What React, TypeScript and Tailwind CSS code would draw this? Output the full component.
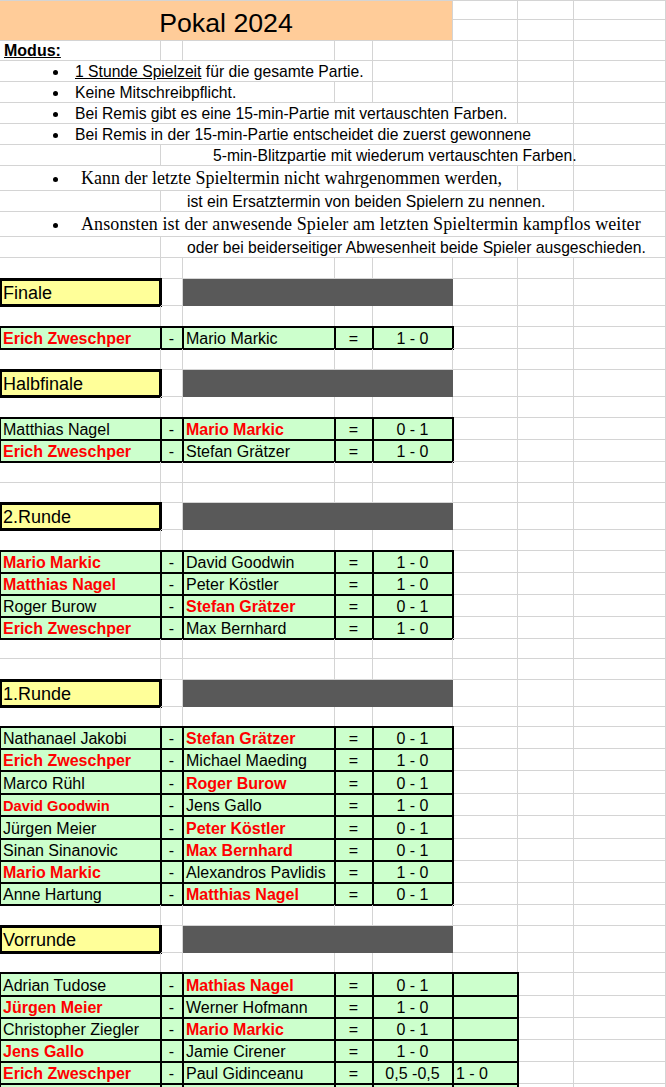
import React from "react";

// Spalten A–H wie im Tabellenblatt
const GRID = "grid grid-cols-[161px_22px_152px_38px_80px_65px_56px_92px]";
const LINE = "border-r border-b border-[#d4d4d4]";
const THICK = "outline-2 outline-solid outline-black -outline-offset-1 bg-[#ccffcc]";
const CELL = "flex items-end whitespace-nowrap overflow-hidden";
const TXT = "flex items-end whitespace-nowrap";
const WIN = "font-bold text-[#ff0000]";
const DESC = "text-[15.7px] leading-[18px]";

function Blank({ span = "" }: { span?: string }) {
  return <div className={`${LINE} ${span}`} />;
}

function Blanks({ n }: { n: number }) {
  return (
    <>
      {Array.from({ length: n }).map((_, i) => (
        <Blank key={i} />
      ))}
    </>
  );
}

function EmptyRow({ h }: { h: string }) {
  return (
    <div className={`${GRID} ${h}`}>
      <Blanks n={8} />
    </div>
  );
}

function Dot({ serif }: { serif?: boolean }) {
  return (
    <>
      <span className="w-[53px] shrink-0" />
      <span
        className={`w-[5px] h-[5px] shrink-0 self-center rounded-full bg-black ${serif ? "mt-[4px]" : "mt-[3px]"}`}
      />
      <span className={serif ? "w-[23px] shrink-0" : "w-[17px] shrink-0"} />
    </>
  );
}

function Header({ label }: { label: string }) {
  return (
    <div className={`${GRID} h-[27px]`}>
      <div
        className={`${LINE} bg-[#ffff99] outline-[3px] outline-solid outline-black -outline-offset-2 flex items-end pl-[3px] pb-[2px] text-[18px] leading-[20px]`}
      >
        {label}
      </div>
      <Blank />
      <div className="col-span-3 bg-[#595959]" />
      <Blanks n={3} />
    </div>
  );
}

type MatchProps = {
  a?: string;
  b?: string;
  r?: string;
  w?: 0 | 1;
  h?: string;
  wide?: boolean;
  extra?: string;
  smallA?: boolean;
  empty?: boolean;
};

function Match({ a = "", b = "", r = "", w, h = "h-[22px]", wide, extra, smallA, empty }: MatchProps) {
  return (
    <div className={`${GRID} ${h} text-[16px] leading-[18px]`}>
      <div className={`${LINE} ${THICK} ${CELL} pl-[3px] ${w === 0 ? WIN : ""} ${smallA ? "text-[14.67px]" : ""}`}>
        {a}
      </div>
      <div className={`${LINE} ${THICK} ${CELL} justify-center`}>{empty ? "" : "-"}</div>
      <div className={`${LINE} ${THICK} ${CELL} pl-[3px] ${w === 1 ? WIN : ""}`}>{b}</div>
      <div className={`${LINE} ${THICK} ${CELL} justify-center`}>{empty ? "" : "="}</div>
      <div className={`${LINE} ${THICK} ${CELL} justify-center`}>{r}</div>
      {wide ? <div className={`${LINE} ${THICK} ${CELL} pl-[3px]`}>{extra}</div> : <Blank />}
      <Blanks n={2} />
    </div>
  );
}

export default function App() {
  return (
    <div className="w-[666px] bg-white text-black font-['Liberation_Sans',Arial,sans-serif]">
      {/* Titel */}
      <div className={`${GRID} grid-rows-[19px_21px] border-t border-[#d4d4d4]`}>
        <div className={`${LINE} col-span-5 row-span-2 bg-[#ffcc99] flex items-end justify-center pb-[2px] text-[26.7px] leading-[30px]`}>
          Pokal 2024
        </div>
        <Blanks n={6} />
      </div>

      {/* Modus */}
      <div className={`${GRID} h-[20px] text-[16px] leading-[18px]`}>
        <div className={`${LINE} ${TXT} pl-[4px] font-bold underline`}>Modus:</div>
        <Blanks n={7} />
      </div>
      <div className={`${GRID} h-[21px] ${DESC}`}>
        <div className={`${LINE} ${TXT} col-span-4`}>
          <Dot />
          <span>
            <span className="underline">1 Stunde Spielzeit</span> für die gesamte Partie.
          </span>
        </div>
        <Blanks n={4} />
      </div>
      <div className={`${GRID} h-[21px] ${DESC}`}>
        <div className={`${LINE} ${TXT} col-span-3`}>
          <Dot />
          <span>Keine Mitschreibpflicht.</span>
        </div>
        <Blanks n={5} />
      </div>
      <div className={`${GRID} h-[21px] ${DESC}`}>
        <div className={`${LINE} ${TXT} col-span-6`}>
          <Dot />
          <span>Bei Remis gibt es eine 15-min-Partie mit vertauschten Farben.</span>
        </div>
        <Blanks n={2} />
      </div>
      <div className={`${GRID} h-[21px] ${DESC}`}>
        <div className={`${LINE} ${TXT} col-span-7`}>
          <Dot />
          <span>Bei Remis in der 15-min-Partie entscheidet die zuerst gewonnene</span>
        </div>
        <Blank />
      </div>
      <div className={`${GRID} h-[21px] ${DESC}`}>
        <Blank />
        <div className={`${LINE} ${TXT} col-span-6 pl-[52px]`}>
          5-min-Blitzpartie mit wiederum vertauschten Farben.
        </div>
        <Blank />
      </div>
      <div className={`${GRID} h-[25px] text-[18px] leading-[20px]`}>
        <div className={`${LINE} ${TXT} col-span-6 pb-[2px] font-['Liberation_Serif','Times_New_Roman',serif]`}>
          <Dot serif />
          <span>Kann der letzte Spieltermin nicht wahrgenommen werden,</span>
        </div>
        <Blanks n={2} />
      </div>
      <div className={`${GRID} h-[21px] ${DESC}`}>
        <Blank />
        <div className={`${LINE} ${TXT} col-span-6 pl-[26px]`}>
          ist ein Ersatztermin von beiden Spielern zu nennen.
        </div>
        <Blank />
      </div>
      <div className={`${GRID} h-[25px] text-[18px] leading-[20px]`}>
        <div className={`${LINE} ${TXT} col-span-8 pb-[2px] tracking-[0.1px] font-['Liberation_Serif','Times_New_Roman',serif]`}>
          <Dot serif />
          <span>Ansonsten ist der anwesende Spieler am letzten Spieltermin kampflos weiter</span>
        </div>
      </div>
      <div className={`${GRID} h-[21px] ${DESC}`}>
        <Blank />
        <div className={`${LINE} ${TXT} col-span-7 pl-[26px]`}>
          oder bei beiderseitiger Abwesenheit beide Spieler ausgeschieden.
        </div>
      </div>
      <EmptyRow h="h-[21px]" />

      {/* Finale */}
      <Header label="Finale" />
      <EmptyRow h="h-[21px]" />
      <Match a="Erich Zweschper" b="Mario Markic" r="1 - 0" w={0} />
      <EmptyRow h="h-[21px]" />

      {/* Halbfinale */}
      <Header label="Halbfinale" />
      <EmptyRow h="h-[21px]" />
      <Match a="Matthias Nagel" b="Mario Markic" r="0 - 1" w={1} />
      <Match a="Erich Zweschper" b="Stefan Grätzer" r="1 - 0" w={0} />
      <EmptyRow h="h-[21px]" />
      <EmptyRow h="h-[20px]" />

      {/* 2. Runde */}
      <Header label="2.Runde" />
      <EmptyRow h="h-[21px]" />
      <Match a="Mario Markic" b="David Goodwin" r="1 - 0" w={0} />
      <Match a="Matthias Nagel" b="Peter Köstler" r="1 - 0" w={0} />
      <Match a="Roger Burow" b="Stefan Grätzer" r="0 - 1" w={1} />
      <Match a="Erich Zweschper" b="Max Bernhard" r="1 - 0" w={0} />
      <EmptyRow h="h-[20px]" />
      <EmptyRow h="h-[21px]" />

      {/* 1. Runde */}
      <Header label="1.Runde" />
      <EmptyRow h="h-[20px]" />
      <Match a="Nathanael Jakobi" b="Stefan Grätzer" r="0 - 1" w={1} />
      <Match a="Erich Zweschper" b="Michael Maeding" r="1 - 0" w={0} />
      <Match a="Marco Rühl" b="Roger Burow" r="0 - 1" w={1} h="h-[23px]" />
      <Match a="David Goodwin" b="Jens Gallo" r="1 - 0" w={0} smallA />
      <Match a="Jürgen Meier" b="Peter Köstler" r="0 - 1" w={1} h="h-[23px]" />
      <Match a="Sinan Sinanovic" b="Max Bernhard" r="0 - 1" w={1} />
      <Match a="Mario Markic" b="Alexandros Pavlidis" r="1 - 0" w={0} />
      <Match a="Anne Hartung" b="Matthias Nagel" r="0 - 1" w={1} />
      <EmptyRow h="h-[21px]" />

      {/* Vorrunde */}
      <Header label="Vorrunde" />
      <EmptyRow h="h-[20px]" />
      <Match a="Adrian Tudose" b="Mathias Nagel" r="0 - 1" w={1} h="h-[23px]" wide />
      <Match a="Jürgen Meier" b="Werner Hofmann" r="1 - 0" w={0} wide />
      <Match a="Christopher Ziegler" b="Mario Markic" r="0 - 1" w={1} wide />
      <Match a="Jens Gallo" b="Jamie Cirener" r="1 - 0" w={0} wide />
      <Match a="Erich Zweschper" b="Paul Gidinceanu" r="0,5 -0,5" w={0} wide extra="1 - 0" />
      <Match wide empty />
    </div>
  );
}
